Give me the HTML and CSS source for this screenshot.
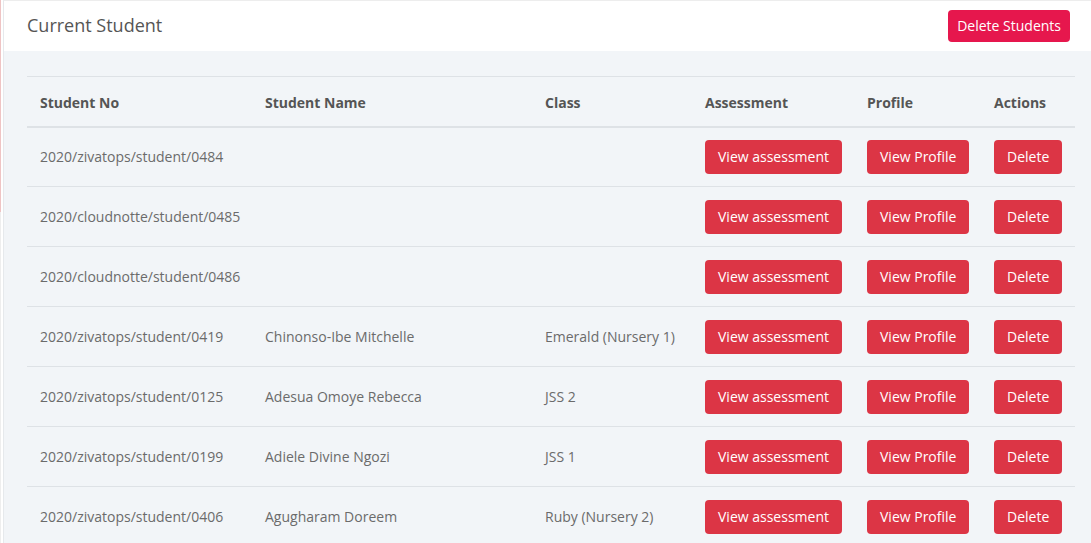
FILE: index.html
```html
<!DOCTYPE html>
<html>
<head>
<meta charset="utf-8">
<link rel="stylesheet" href="styles.css">
</head>
<body>
<div class="page">
  <div class="card">
    <div class="card-header">
      <h3 class="title">Current Student</h3>
      <button class="btn btn-pink">Delete Students</button>
    </div>
    <div class="card-body">
      <table class="table">
        <colgroup>
          <col class="c1"><col class="c2"><col class="c3"><col class="c4"><col class="c5"><col class="c6">
        </colgroup>
        <thead>
          <tr><th>Student No</th><th>Student Name</th><th>Class</th><th>Assessment</th><th>Profile</th><th>Actions</th></tr>
        </thead>
        <tbody>
          <tr><td>2020/zivatops/student/0484</td><td></td><td></td><td><button class="btn btn-red">View assessment</button></td><td><button class="btn btn-red">View Profile</button></td><td><button class="btn btn-red">Delete</button></td></tr>
          <tr><td>2020/cloudnotte/student/0485</td><td></td><td></td><td><button class="btn btn-red">View assessment</button></td><td><button class="btn btn-red">View Profile</button></td><td><button class="btn btn-red">Delete</button></td></tr>
          <tr><td>2020/cloudnotte/student/0486</td><td></td><td></td><td><button class="btn btn-red">View assessment</button></td><td><button class="btn btn-red">View Profile</button></td><td><button class="btn btn-red">Delete</button></td></tr>
          <tr><td>2020/zivatops/student/0419</td><td>Chinonso-Ibe Mitchelle</td><td>Emerald (Nursery 1)</td><td><button class="btn btn-red">View assessment</button></td><td><button class="btn btn-red">View Profile</button></td><td><button class="btn btn-red">Delete</button></td></tr>
          <tr><td>2020/zivatops/student/0125</td><td>Adesua Omoye Rebecca</td><td>JSS 2</td><td><button class="btn btn-red">View assessment</button></td><td><button class="btn btn-red">View Profile</button></td><td><button class="btn btn-red">Delete</button></td></tr>
          <tr><td>2020/zivatops/student/0199</td><td>Adiele Divine Ngozi</td><td>JSS 1</td><td><button class="btn btn-red">View assessment</button></td><td><button class="btn btn-red">View Profile</button></td><td><button class="btn btn-red">Delete</button></td></tr>
          <tr><td>2020/zivatops/student/0406</td><td>Agugharam Doreem</td><td>Ruby (Nursery 2)</td><td><button class="btn btn-red">View assessment</button></td><td><button class="btn btn-red">View Profile</button></td><td><button class="btn btn-red">Delete</button></td></tr>
        </tbody>
      </table>
    </div>
  </div>
</div>
</body>
</html>
```

FILE: styles.css
```css
* { box-sizing: border-box; }
html, body { margin: 0; padding: 0; background: #ffffff; }
body {
  font-family: "Open Sans", "Liberation Sans", sans-serif;
  font-size: 14px;
  color: #6b6b6b;
  height: 543px;
  overflow: hidden;
}
.page {
  position: relative;
  padding-left: 2px;
  border-left: 1px solid #eeeeee;
  min-height: 543px;
}
.page::before {
  content: "";
  position: absolute;
  left: -1px;
  top: 0;
  width: 1px;
  height: 212px;
  background: #efc4c4;
}
.card {
  border-left: 1px solid #e6e9ec;
  border-top: 1px solid #ededed;
  background: #f2f5f8;
  min-height: 543px;
}
.card-header {
  height: 50px;
  background: #ffffff;
  display: flex;
  align-items: center;
  justify-content: space-between;
  padding: 0 21px 0 23px;
}
.title {
  margin: 0;
  font-size: 18px;
  font-weight: 400;
  color: #555555;
  position: relative;
  top: -1px;
}
.btn {
  font-family: "Open Sans", "Liberation Sans", sans-serif;
  font-size: 14px;
  color: #ffffff;
  border: 0;
  border-radius: 4px;
  line-height: 20px;
  cursor: pointer;
}
.btn-pink {
  background: #e6174d;
  padding: 6px 9px;
  height: 32px;
}
.btn-red {
  background: #dc3545;
  padding: 7px 13px;
  height: 34px;
}
.card-body {
  padding: 25px 16px 0 23px;
}
.table {
  width: 1048px;
  table-layout: fixed;
  border-collapse: collapse;
}
.c1 { width: 225px; }
.c2 { width: 280px; }
.c3 { width: 160px; }
.c4 { width: 162px; }
.c5 { width: 127px; }
.c6 { width: 94px; }
.table th {
  text-align: left;
  font-weight: 700;
  color: #555555;
  height: 50px;
  padding: 2px 13px 0;
  border-top: 1px solid #dee2e6;
  border-bottom: 2px solid #dee2e6;
}
.table td {
  height: 60px;
  padding: 0 13px;
  border-bottom: 1px solid #dee2e6;
  white-space: nowrap;
  vertical-align: middle;
}
```
